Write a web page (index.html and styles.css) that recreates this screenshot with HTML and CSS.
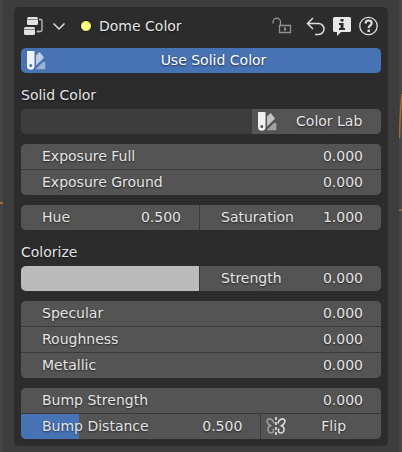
FILE: index.html
```html
<!DOCTYPE html>
<html lang="en">
<head>
<meta charset="utf-8">
<meta name="viewport" content="width=device-width, initial-scale=1">
<title>Dome Color</title>
<link rel="stylesheet" href="styles.css">
</head>
<body>
<svg class="symbols" aria-hidden="true">
  <symbol id="swatches" viewBox="0 0 20 20">
    <path fill-rule="evenodd" fill="#fff" opacity=".92" d="M1.500 1h6.500q.5 0 .5.500V16a3.700 3.700 0 0 1-7.500 0V1.500q0-.5.5-.5zM4.800 14a1.500 1.500 0 1 0 0 3 1.500 1.500 0 0 0 0-3z"/>
    <path fill="#fff" opacity=".65" d="M10 5.500 13 2.500q.5-.5 1 0L17.700 7q.4.500 0 1L10 15.500z"/>
    <path fill="#fff" opacity=".45" d="M9.500 19.300 17 12h1.800q.5 0 .5.500v6.300q0 .5-.5.500z"/>
  </symbol>
</svg>
<div class="workspace">
  <div class="edge">
    <svg class="edge-lines" width="3" height="452" viewBox="0 0 3 452" fill="none" aria-hidden="true"><path d="M0 203h3" stroke="#a86c2c" stroke-width="2"/></svg>
  </div>
  <main class="region">
    <form class="panel">
      <header class="panel-header">
        <button type="button" class="icon-button type-menu" aria-label="Node type">
          <svg width="20" height="20" viewBox="0 0 20 20" fill="none" aria-hidden="true">
            <rect x="3" y="1" width="11" height="8" rx="1.500" fill="#e2e2e2"/><path d="M3 3.500h11" stroke="#858585"/>
            <rect x="0" y="11" width="11" height="8" rx="1.500" fill="#e2e2e2"/><path d="M0 13.500h11" stroke="#858585"/>
            <path d="M15 3.500h1.500q1.500 0 1.500 1.500v8.500q0 2-2 2h-3" stroke="#bdbdbd" stroke-width="1.300"/><path d="m14.500 14-2 1.500 2 1.500" fill="#bdbdbd"/>
          </svg>
          <svg width="14" height="20" viewBox="0 0 14 20" fill="none" stroke="#dedede" stroke-width="1.500" aria-hidden="true"><path d="m1.500 7.500 5.500 5.500 5.500-5.500"/></svg>
        </button>
        <span class="socket"></span>
        <h1 class="title">Dome Color</h1>
        <button type="button" class="icon-button lock" aria-label="Lock">
          <svg width="20" height="20" viewBox="0 0 20 20" fill="none" stroke="#929292" stroke-width="1.300" aria-hidden="true"><path d="M1 7.500V6a3.700 3.700 0 0 1 7.500 0v3.500M7.500 9.500h11v7h-11z"/><path d="M13 11.500v3" stroke-width="2"/></svg>
        </button>
        <button type="button" class="icon-button" aria-label="Reset">
          <svg width="20" height="20" viewBox="0 0 20 20" fill="none" stroke="#dedede" stroke-width="1.500" aria-hidden="true"><path d="M8 2 2.500 7.500 8 13M2.500 7.500h11a5.500 5.500 0 0 1 0 11H10"/></svg>
        </button>
        <button type="button" class="icon-button" aria-label="Info">
          <svg width="20" height="20" viewBox="0 0 20 20" aria-hidden="true"><path fill="#e8e8e8" d="M2.500 1h15q1.500 0 1.500 1.500v12q0 1.500-1.500 1.500H9l-4 4v-4H2.500Q1 16 1 14.500v-12Q1 1 2.500 1z"/><path fill="#2c2c2c" d="M8.500 3h3v2.500h-3zM7 7h4.500v5H13v2H7v-2h1.500V9H7z"/></svg>
        </button>
        <button type="button" class="icon-button" aria-label="Help">
          <svg width="20" height="20" viewBox="0 0 20 20" fill="none" stroke="#dedede" aria-hidden="true"><circle cx="9.500" cy="10" r="8.700" stroke-width="1.300"/><path d="M6.500 7.500q.2-3 3.200-3t3 2.700c0 2.300-3 2.200-3 4.800" stroke-width="2.200"/><path d="M9.700 13.500V16" stroke-width="2.400"/></svg>
        </button>
      </header>

      <div class="group">
        <button type="button" class="cell action active" aria-pressed="true"><svg class="action-icon" aria-hidden="true"><use href="#swatches"/></svg><span class="caption">Use Solid Color</span></button>
      </div>

      <section class="section">
        <label class="section-label" for="solid">Solid Color</label>
        <div class="group split-lab">
          <input type="color" class="swatch" id="solid" value="#3d3d3d">
          <button type="button" class="cell action"><svg class="action-icon" aria-hidden="true"><use href="#swatches"/></svg><span class="caption">Color Lab</span></button>
        </div>
      </section>

      <div class="group">
        <div class="cell"><label for="exposure-full">Exposure Full</label><input class="value" id="exposure-full" value="0.000"></div>
        <div class="cell"><label for="exposure-ground">Exposure Ground</label><input class="value" id="exposure-ground" value="0.000"></div>
      </div>

      <div class="group split-half">
        <div class="cell"><label for="hue">Hue</label><input class="value" id="hue" value="0.500"></div>
        <div class="cell"><label for="saturation">Saturation</label><input class="value" id="saturation" value="1.000"></div>
      </div>

      <section class="section">
        <label class="section-label" for="colorize">Colorize</label>
        <div class="group split-half">
          <input type="color" class="swatch" id="colorize" value="#bbbbbb">
          <div class="cell"><label for="strength">Strength</label><input class="value" id="strength" value="0.000"></div>
        </div>
      </section>

      <div class="group">
        <div class="cell"><label for="specular">Specular</label><input class="value" id="specular" value="0.000"></div>
        <div class="cell"><label for="roughness">Roughness</label><input class="value" id="roughness" value="0.000"></div>
        <div class="cell"><label for="metallic">Metallic</label><input class="value" id="metallic" value="0.000"></div>
      </div>

      <div class="group split-flip">
        <div class="cell wide"><label for="bump-strength">Bump Strength</label><input class="value" id="bump-strength" value="0.000"></div>
        <div class="cell slider" style="--fill: 24.3%"><label for="bump-distance">Bump Distance</label><input class="value" id="bump-distance" value="0.500"></div>
        <button type="button" class="cell action" aria-pressed="false">
          <svg class="action-icon" viewBox="0 0 20 20" fill="none" stroke-width="1.600" aria-hidden="true">
            <path stroke="#a0a0a0" d="M8 7.500C7.500 4.500 5 2.500 2.500 3 0 4 1 8 4.500 9.800 1.500 11 1.500 13.500 2.500 15.500c1 2 4.500 2 5 0 .3-1 0-2-.7-2.700"/>
            <path stroke="#dedede" d="M12 7.500C12.500 4.500 15 2.500 17.500 3c2.500 1 1.500 5-2 6.800 3 1.200 3 3.700 2 5.700-1 2-4.500 2-5 0-.3-1 0-2 .7-2.700"/>
            <path stroke="#e8e8e8" stroke-dasharray="3 2" d="M10 1v18"/>
          </svg><span class="caption">Flip</span></button>
      </div>
    </form>
  </main>
  <div class="edge edge-right">
    <svg class="edge-lines" width="3" height="452" viewBox="0 0 3 452" fill="none" aria-hidden="true"><path d="M3 94Q1 112 .5 138M0 210h3" stroke="#a86c2c" stroke-width="1.500"/></svg>
  </div>
</div>
</body>
</html>
```
FILE: styles.css
```css
* {
  box-sizing: border-box;
}

body {
  margin: 0;
  background: #3d3d3d;
  color: #e4e4e4;
  font: 14px/20px "DejaVu Sans", sans-serif;
}

button,
input {
  margin: 0;
  padding: 0;
  border: 0;
  border-radius: 0;
  background: none;
  color: inherit;
  font: inherit;
  text-shadow: inherit;
}

.symbols {
  display: none;
}

.workspace {
  display: flex;
  min-height: 100vh;
}

.edge {
  position: relative;
  flex: 0 0 3px;
  background: #444;
  overflow: hidden;
}

.edge-right {
  background: #484644;
}

.edge-lines {
  position: absolute;
  top: 0;
  left: 0;
}

.region {
  flex: 1;
  min-width: 0;
  padding: 7px 11px 0;
  background: #3d3d3d;
}

.panel {
  display: flex;
  flex-direction: column;
  gap: 10px;
  padding: 0 7px 7px;
  border-radius: 5px;
  background: #2c2c2c;
  text-shadow: 0 1px 2px rgb(0 0 0 / 60%);
}

.panel-header {
  display: flex;
  align-items: center;
  height: 31px;
  padding: 7px 2px 0 3px;
  gap: 7px;
}

.icon-button {
  display: flex;
  flex: none;
}

.type-menu {
  gap: 8px;
  margin-right: 7px;
}

.lock {
  margin-right: 6px;
}

.socket {
  width: 12px;
  height: 12px;
  border: 1px solid #111;
  border-radius: 50%;
  background: #ffff80;
}

.title {
  flex: 1;
  margin: 0;
  font: inherit;
}

.group {
  display: grid;
  gap: 1px;
  border-radius: 5px;
  background: #3a3a3a;
  box-shadow: 0 0 1px #444;
  overflow: hidden;
}

.split-half {
  grid-template-columns: 178fr 181fr;
}

.split-lab {
  grid-template-columns: 9fr 5fr;
  gap: 0;
}

.split-flip {
  grid-template-columns: 2fr 1fr;
}

.wide {
  grid-column: 1 / -1;
}

.section-label {
  display: block;
  padding: 2px 0 4px;
}

.cell {
  display: flex;
  align-items: center;
  min-width: 0;
  height: 25px;
  padding: 0 18px 1px 21px;
  background: #545454;
}

.cell label {
  flex: 1;
  white-space: nowrap;
}

.value {
  width: 48px;
  text-align: right;
}

.slider {
  background: linear-gradient(#4772b3, #4772b3) 0 0 / var(--fill) 100% no-repeat #545454;
}

.action {
  padding: 0 0 1px 5px;
}

.action-icon {
  flex: none;
  width: 20px;
  height: 20px;
}

.caption {
  flex: 1;
  text-align: center;
}

.active {
  background: #4772b3;
  color: #fff;
}

.swatch {
  width: 100%;
  height: 25px;
  appearance: none;
}

.swatch::-webkit-color-swatch-wrapper {
  padding: 0;
}

.swatch::-webkit-color-swatch {
  border: 0;
  border-radius: 0;
}
```
